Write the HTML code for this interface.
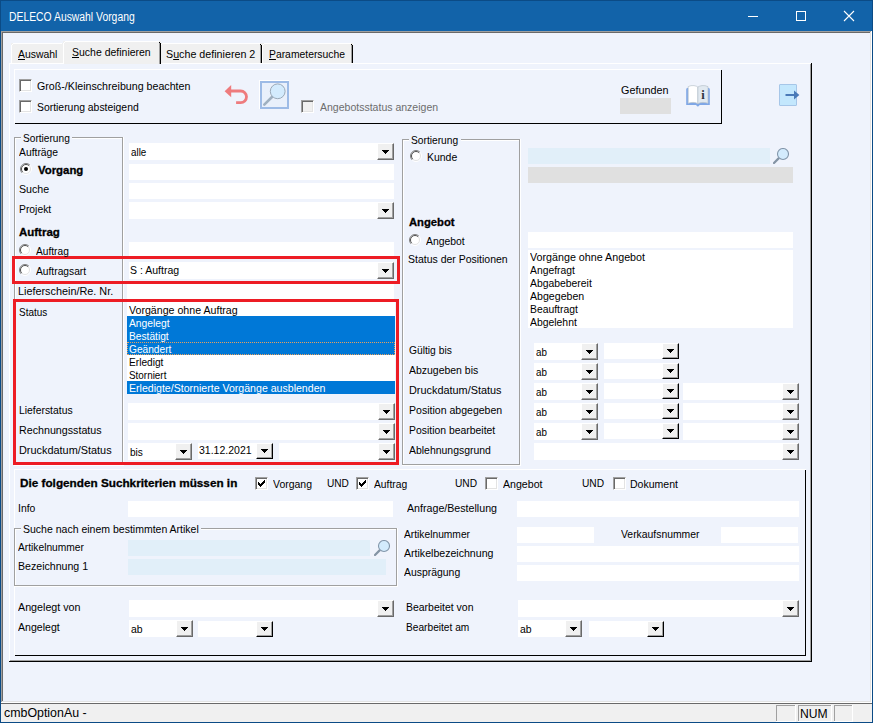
<!DOCTYPE html>
<html lang="de"><head><meta charset="utf-8"><title>DELECO Auswahl Vorgang</title><style>
html,body{margin:0;padding:0;background:#eff3fc;}
body{width:873px;height:723px;position:relative;overflow:hidden;font-family:"Liberation Sans",sans-serif;font-size:11px;}
body>div,.abs{position:absolute;}
.t{position:absolute;white-space:nowrap;transform-origin:0 0;display:block;}
.btn{background:#f0f0f0;box-sizing:border-box;border-top:1px solid #fff;border-left:1px solid #fff;border-right:1px solid #696969;border-bottom:1px solid #696969;box-shadow:inset -1px -1px 0 #a0a0a0;}
.btn svg{position:absolute;left:4px;top:6px;display:block;}
.btn.d svg{top:5px;}
.btn.d{border-right-color:#000;border-bottom-color:#000;}
.chk{width:13px;height:13px;box-sizing:border-box;background:#fff;border:1px solid;border-color:#a0a0a0 #fff #fff #a0a0a0;box-shadow:inset 1px 1px 0 #696969, inset -1px -1px 0 #e3e3e3;}
.chk svg{left:2px!important;top:2px!important;}
.chk.dis{background:#f0f0f0;}
</style></head><body>
<div style="left:0px;top:0px;width:873px;height:723px;background:#0b4b86;"></div>
<div style="left:1px;top:1px;width:871px;height:30px;background:#1263a9;"></div>
<div style="left:1px;top:31px;width:871px;height:672px;background:#eff3fc;"></div>
<div style="left:1px;top:31px;width:1px;height:672px;background:#a0a0a0;"></div>
<div style="left:2px;top:32px;width:1px;height:670px;background:#696969;"></div>
<div style="left:1px;top:31px;width:870px;height:1px;background:#a0a0a0;"></div>
<div style="left:2px;top:32px;width:868px;height:1px;background:#696969;"></div>
<div style="left:870px;top:32px;width:1px;height:670px;background:#e3e3e3;"></div>
<div style="left:871px;top:31px;width:1px;height:672px;background:#fff;"></div>
<div style="left:2px;top:701px;width:869px;height:1px;background:#e3e3e3;"></div>
<div style="left:1px;top:702px;width:871px;height:1px;background:#fff;"></div>
<svg class="abs" style="left:735px;top:0" width="138" height="31" viewBox="0 0 138 31"><path d="M13 16.5h10" stroke="#fff" stroke-width="1"/><rect x="61.5" y="11.5" width="9" height="9" fill="none" stroke="#fff" stroke-width="1"/><path d="M109 11l10 10M119 11l-10 10" stroke="#fff" stroke-width="1.1"/></svg>
<div style="left:1px;top:703px;width:871px;height:1px;background:#696969;"></div>
<div style="left:1px;top:704px;width:871px;height:18px;background:#f0f0f0;"></div>
<div style="left:776px;top:705px;width:1px;height:16px;background:#a0a0a0;"></div>
<div style="left:776px;top:705px;width:19px;height:1px;background:#a0a0a0;"></div>
<div style="left:795px;top:705px;width:1px;height:17px;background:#fff;"></div>
<div style="left:776px;top:721px;width:20px;height:1px;background:#fff;"></div>
<div style="left:798px;top:705px;width:1px;height:16px;background:#a0a0a0;"></div>
<div style="left:798px;top:705px;width:33px;height:1px;background:#a0a0a0;"></div>
<div style="left:831px;top:705px;width:1px;height:17px;background:#fff;"></div>
<div style="left:798px;top:721px;width:34px;height:1px;background:#fff;"></div>
<div style="left:834px;top:705px;width:1px;height:16px;background:#a0a0a0;"></div>
<div style="left:834px;top:705px;width:18px;height:1px;background:#a0a0a0;"></div>
<div style="left:852px;top:705px;width:1px;height:17px;background:#fff;"></div>
<div style="left:834px;top:721px;width:19px;height:1px;background:#fff;"></div>
<div style="left:9px;top:63px;width:802px;height:1px;background:#fff;"></div>
<div style="left:9px;top:63px;width:1px;height:598px;background:#fff;"></div>
<div style="left:810px;top:64px;width:1px;height:597px;background:#a0a0a0;"></div>
<div style="left:811px;top:63px;width:1px;height:599px;background:#000;"></div>
<div style="left:10px;top:660px;width:801px;height:1px;background:#a0a0a0;"></div>
<div style="left:9px;top:661px;width:803px;height:1px;background:#000;"></div>
<div style="left:11px;top:43px;width:53px;height:20px;background:#f0f0f0;"></div>
<div style="left:11px;top:45px;width:1px;height:18px;background:#fff;"></div>
<div style="left:13px;top:43px;width:49px;height:1px;background:#fff;"></div>
<div style="left:12px;top:44px;width:1px;height:1px;background:#fff;"></div>
<div style="left:160px;top:43px;width:102px;height:20px;background:#f0f0f0;"></div>
<div style="left:160px;top:45px;width:1px;height:18px;background:#fff;"></div>
<div style="left:162px;top:43px;width:98px;height:1px;background:#fff;"></div>
<div style="left:161px;top:44px;width:1px;height:1px;background:#fff;"></div>
<div style="left:261px;top:45px;width:1px;height:18px;background:#000;"></div>
<div style="left:260px;top:44px;width:1px;height:1px;background:#000;"></div>
<div style="left:260px;top:45px;width:1px;height:18px;background:#a0a0a0;"></div>
<div style="left:262px;top:43px;width:91px;height:20px;background:#f0f0f0;"></div>
<div style="left:262px;top:45px;width:1px;height:18px;background:#fff;"></div>
<div style="left:264px;top:43px;width:87px;height:1px;background:#fff;"></div>
<div style="left:263px;top:44px;width:1px;height:1px;background:#fff;"></div>
<div style="left:352px;top:45px;width:1px;height:18px;background:#000;"></div>
<div style="left:351px;top:44px;width:1px;height:1px;background:#000;"></div>
<div style="left:351px;top:45px;width:1px;height:18px;background:#a0a0a0;"></div>
<div style="left:63px;top:41px;width:98px;height:23px;background:#f0f0f0;"></div>
<div style="left:63px;top:43px;width:1px;height:21px;background:#fff;"></div>
<div style="left:65px;top:41px;width:94px;height:1px;background:#fff;"></div>
<div style="left:64px;top:42px;width:1px;height:1px;background:#fff;"></div>
<div style="left:160px;top:43px;width:1px;height:21px;background:#000;"></div>
<div style="left:159px;top:42px;width:1px;height:1px;background:#000;"></div>
<div style="left:159px;top:43px;width:1px;height:21px;background:#a0a0a0;"></div>
<div style="left:14px;top:69px;width:707px;height:1px;background:#fff;"></div>
<div style="left:14px;top:69px;width:1px;height:54px;background:#fff;"></div>
<div style="left:721px;top:70px;width:1px;height:54px;background:#000;"></div>
<div style="left:15px;top:123px;width:707px;height:1px;background:#000;"></div>
<div class="chk" style="left:19px;top:79px"></div>
<div class="chk" style="left:19px;top:100px"></div>
<div class="chk dis" style="left:301px;top:100px"></div>
<svg class="abs" style="left:220px;top:80px" width="32" height="28" viewBox="220 80 32 28"><path d="M230.5 91H240.7A5.8 5.8 0 0 1 240.7 102.6H236.1" fill="none" stroke="#ee7b7d" stroke-width="2.8"/><path d="M224.6 91.2L231.2 85V97.2z" fill="#ee7b7d"/></svg>
<div style="left:259px;top:80px;width:30px;height:29px;background:#fff;"></div>
<div style="left:260px;top:81px;width:29px;height:28px;background:#e9f0fb;border:2px solid #9dbbe6;box-sizing:border-box"></div>
<svg class="abs" style="left:260px;top:81px" width="29" height="28" viewBox="260 81 29 28"><path d="M264.3 104.6L272 97" stroke="#9fb0c0" stroke-width="2.6" stroke-linecap="round"/><circle cx="277.7" cy="91.3" r="7.4" fill="#d3ebfd" stroke="#9aa9b8" stroke-width="1"/></svg>
<div style="left:620px;top:98px;width:51px;height:16px;background:#e0e0e0;"></div>
<svg class="abs" style="left:684px;top:83px" width="28" height="26" viewBox="684 83 28 26"><path d="M686.2 89.2Q686.2 87.7 688 87.7H708Q709.8 87.7 709.8 89.2V104.9H699.8L697.9 106.8L695.9 104.9H686.2z" fill="#7fa7e6"/><path d="M688.2 86.6Q691 85.2 694 85.6Q696.5 86 697.9 87V103.7Q696 102.4 693 102.4Q690 102.4 688.2 103.3z" fill="#fff" stroke="#b9c3cc" stroke-width="0.7"/><path d="M697.9 87Q699.5 86 702 85.6Q705 85.2 708 86.6V103.3Q706 102.4 703 102.4Q700 102.4 697.9 103.7z" fill="#e1e9f0" stroke="#b9c3cc" stroke-width="0.7"/><text x="703.1" y="98.7" font-family="Liberation Serif, serif" font-size="12.5" font-weight="bold" text-anchor="middle" fill="#2d3340">i</text></svg>
<div style="left:779px;top:84px;width:18px;height:22px;background:#c3e7fd;border:1px solid #a6c6e8;box-sizing:border-box;border-radius:1px"></div>
<svg class="abs" style="left:780px;top:86px" width="22" height="18" viewBox="780 86 22 18"><path d="M785.5 95H795" stroke="#4a7ab8" stroke-width="2"/><path d="M794 90.6L799.4 95L794 99.4z" fill="#4a7ab8"/></svg>
<div style="left:15px;top:138px;width:107px;height:1px;background:#fff;"></div>
<div style="left:15px;top:138px;width:1px;height:326px;background:#fff;"></div>
<div style="left:14px;top:465px;width:110px;height:1px;background:#fff;"></div>
<div style="left:123px;top:137px;width:1px;height:329px;background:#fff;"></div>
<div style="left:14px;top:137px;width:109px;height:1px;background:#a0a0a0;"></div>
<div style="left:14px;top:464px;width:109px;height:1px;background:#a0a0a0;"></div>
<div style="left:14px;top:137px;width:1px;height:328px;background:#a0a0a0;"></div>
<div style="left:122px;top:137px;width:1px;height:328px;background:#a0a0a0;"></div>
<div style="left:21px;top:137px;width:51px;height:2px;background:#eff3fc;"></div>
<svg class="abs" style="left:20px;top:163px" width="12" height="12" viewBox="0 0 12 12"><circle cx="6" cy="6" r="5" fill="#fff"/><path d="M9.9 2.1A5.5 5.5 0 0 0 2.1 9.9" fill="none" stroke="#808080" stroke-width="1"/><path d="M9.2 2.8A4.5 4.5 0 0 0 2.8 9.2" fill="none" stroke="#505050" stroke-width="1"/><path d="M9.9 2.1A5.5 5.5 0 0 1 2.1 9.9" fill="none" stroke="#fff" stroke-width="1"/><path d="M9.2 2.8A4.5 4.5 0 0 1 2.8 9.2" fill="none" stroke="#e3e3e3" stroke-width="1"/><circle cx="6" cy="6" r="2" fill="#000"/></svg>
<svg class="abs" style="left:19px;top:244px" width="12" height="12" viewBox="0 0 12 12"><circle cx="6" cy="6" r="5" fill="#fff"/><path d="M9.9 2.1A5.5 5.5 0 0 0 2.1 9.9" fill="none" stroke="#808080" stroke-width="1"/><path d="M9.2 2.8A4.5 4.5 0 0 0 2.8 9.2" fill="none" stroke="#505050" stroke-width="1"/><path d="M9.9 2.1A5.5 5.5 0 0 1 2.1 9.9" fill="none" stroke="#fff" stroke-width="1"/><path d="M9.2 2.8A4.5 4.5 0 0 1 2.8 9.2" fill="none" stroke="#e3e3e3" stroke-width="1"/></svg>
<svg class="abs" style="left:19px;top:264px" width="12" height="12" viewBox="0 0 12 12"><circle cx="6" cy="6" r="5" fill="#fff"/><path d="M9.9 2.1A5.5 5.5 0 0 0 2.1 9.9" fill="none" stroke="#808080" stroke-width="1"/><path d="M9.2 2.8A4.5 4.5 0 0 0 2.8 9.2" fill="none" stroke="#505050" stroke-width="1"/><path d="M9.9 2.1A5.5 5.5 0 0 1 2.1 9.9" fill="none" stroke="#fff" stroke-width="1"/><path d="M9.2 2.8A4.5 4.5 0 0 1 2.8 9.2" fill="none" stroke="#e3e3e3" stroke-width="1"/></svg>
<div style="left:129px;top:143px;width:248px;height:17px;background:#fff;"></div>
<div class="btn" style="left:377px;top:143px;width:17px;height:17px"><svg width="7" height="4" viewBox="0 0 7 4"><path d="M0 0h7v1H0zM1 1h5v1H1zM2 2h3v1H2zM3 3h1v1H3z"/></svg></div>
<div style="left:129px;top:164px;width:265px;height:16px;background:#fff;"></div>
<div style="left:129px;top:183px;width:265px;height:16px;background:#fff;"></div>
<div style="left:129px;top:202px;width:248px;height:17px;background:#fff;"></div>
<div class="btn" style="left:377px;top:202px;width:17px;height:17px"><svg width="7" height="4" viewBox="0 0 7 4"><path d="M0 0h7v1H0zM1 1h5v1H1zM2 2h3v1H2zM3 3h1v1H3z"/></svg></div>
<div style="left:129px;top:242px;width:265px;height:14px;background:#fff;"></div>
<div style="left:129px;top:262px;width:248px;height:17px;background:#fff;"></div>
<div class="btn" style="left:377px;top:262px;width:17px;height:17px"><svg width="7" height="4" viewBox="0 0 7 4"><path d="M0 0h7v1H0zM1 1h5v1H1zM2 2h3v1H2zM3 3h1v1H3z"/></svg></div>
<div style="left:127px;top:284px;width:267px;height:15px;background:#fff;"></div>
<div style="left:127px;top:302px;width:268px;height:92px;background:#fff;"></div>
<div style="left:127px;top:316px;width:268px;height:39px;background:#0078d7;"></div>
<div style="left:127px;top:381px;width:268px;height:13px;background:#0078d7;"></div>
<div style="left:127px;top:342px;width:268px;height:13px;border:1px dotted #e8a05c;box-sizing:border-box"></div>
<div style="left:128px;top:403px;width:250px;height:17px;background:#fff;"></div>
<div class="btn" style="left:378px;top:403px;width:17px;height:17px"><svg width="7" height="4" viewBox="0 0 7 4"><path d="M0 0h7v1H0zM1 1h5v1H1zM2 2h3v1H2zM3 3h1v1H3z"/></svg></div>
<div style="left:128px;top:423px;width:250px;height:17px;background:#fff;"></div>
<div class="btn" style="left:378px;top:423px;width:17px;height:17px"><svg width="7" height="4" viewBox="0 0 7 4"><path d="M0 0h7v1H0zM1 1h5v1H1zM2 2h3v1H2zM3 3h1v1H3z"/></svg></div>
<div style="left:128px;top:443px;width:47px;height:17px;background:#fff;"></div>
<div class="btn" style="left:175px;top:443px;width:17px;height:17px"><svg width="7" height="4" viewBox="0 0 7 4"><path d="M0 0h7v1H0zM1 1h5v1H1zM2 2h3v1H2zM3 3h1v1H3z"/></svg></div>
<div style="left:198px;top:443px;width:58px;height:16px;background:#fff;"></div>
<div class="btn d" style="left:256px;top:443px;width:17px;height:16px"><svg width="7" height="4" viewBox="0 0 7 4"><path d="M0 0h7v1H0zM1 1h5v1H1zM2 2h3v1H2zM3 3h1v1H3z"/></svg></div>
<div style="left:279px;top:443px;width:99px;height:17px;background:#fff;"></div>
<div class="btn" style="left:378px;top:443px;width:17px;height:17px"><svg width="7" height="4" viewBox="0 0 7 4"><path d="M0 0h7v1H0zM1 1h5v1H1zM2 2h3v1H2zM3 3h1v1H3z"/></svg></div>
<div style="left:12px;top:256px;width:388px;height:28px;border:3px solid #ed1c24;box-sizing:border-box"></div>
<div style="left:13px;top:299px;width:386px;height:166px;border:3px solid #ed1c24;box-sizing:border-box"></div>
<div style="left:403px;top:140px;width:116px;height:1px;background:#fff;"></div>
<div style="left:403px;top:140px;width:1px;height:324px;background:#fff;"></div>
<div style="left:402px;top:465px;width:119px;height:1px;background:#fff;"></div>
<div style="left:520px;top:139px;width:1px;height:327px;background:#fff;"></div>
<div style="left:402px;top:139px;width:118px;height:1px;background:#a0a0a0;"></div>
<div style="left:402px;top:464px;width:118px;height:1px;background:#a0a0a0;"></div>
<div style="left:402px;top:139px;width:1px;height:326px;background:#a0a0a0;"></div>
<div style="left:519px;top:139px;width:1px;height:326px;background:#a0a0a0;"></div>
<div style="left:409px;top:139px;width:52px;height:2px;background:#eff3fc;"></div>
<svg class="abs" style="left:410px;top:150px" width="12" height="12" viewBox="0 0 12 12"><circle cx="6" cy="6" r="5" fill="#fff"/><path d="M9.9 2.1A5.5 5.5 0 0 0 2.1 9.9" fill="none" stroke="#808080" stroke-width="1"/><path d="M9.2 2.8A4.5 4.5 0 0 0 2.8 9.2" fill="none" stroke="#505050" stroke-width="1"/><path d="M9.9 2.1A5.5 5.5 0 0 1 2.1 9.9" fill="none" stroke="#fff" stroke-width="1"/><path d="M9.2 2.8A4.5 4.5 0 0 1 2.8 9.2" fill="none" stroke="#e3e3e3" stroke-width="1"/></svg>
<svg class="abs" style="left:409px;top:234px" width="12" height="12" viewBox="0 0 12 12"><circle cx="6" cy="6" r="5" fill="#fff"/><path d="M9.9 2.1A5.5 5.5 0 0 0 2.1 9.9" fill="none" stroke="#808080" stroke-width="1"/><path d="M9.2 2.8A4.5 4.5 0 0 0 2.8 9.2" fill="none" stroke="#505050" stroke-width="1"/><path d="M9.9 2.1A5.5 5.5 0 0 1 2.1 9.9" fill="none" stroke="#fff" stroke-width="1"/><path d="M9.2 2.8A4.5 4.5 0 0 1 2.8 9.2" fill="none" stroke="#e3e3e3" stroke-width="1"/></svg>
<div style="left:528px;top:148px;width:242px;height:16px;background:#e1eff9;"></div>
<svg class="abs" style="left:773px;top:148px" width="16" height="16" viewBox="0 0 16 16"><path d="M1 15L5.6 10.4" stroke="#8494a5" stroke-width="2.2" stroke-linecap="round"/><circle cx="10" cy="6" r="5.5" fill="#d3ebfd" stroke="#8396aa" stroke-width="1.1"/></svg>
<div style="left:528px;top:167px;width:265px;height:16px;background:#e0e0e0;"></div>
<div style="left:528px;top:232px;width:265px;height:16px;background:#fff;"></div>
<div style="left:528px;top:250px;width:265px;height:78px;background:#fff;"></div>
<div style="left:534px;top:343px;width:47px;height:17px;background:#fff;"></div>
<div class="btn" style="left:581px;top:343px;width:17px;height:17px"><svg width="7" height="4" viewBox="0 0 7 4"><path d="M0 0h7v1H0zM1 1h5v1H1zM2 2h3v1H2zM3 3h1v1H3z"/></svg></div>
<div style="left:604px;top:343px;width:58px;height:16px;background:#fff;"></div>
<div class="btn d" style="left:662px;top:343px;width:17px;height:16px"><svg width="7" height="4" viewBox="0 0 7 4"><path d="M0 0h7v1H0zM1 1h5v1H1zM2 2h3v1H2zM3 3h1v1H3z"/></svg></div>
<div style="left:534px;top:363px;width:47px;height:17px;background:#fff;"></div>
<div class="btn" style="left:581px;top:363px;width:17px;height:17px"><svg width="7" height="4" viewBox="0 0 7 4"><path d="M0 0h7v1H0zM1 1h5v1H1zM2 2h3v1H2zM3 3h1v1H3z"/></svg></div>
<div style="left:604px;top:363px;width:58px;height:16px;background:#fff;"></div>
<div class="btn d" style="left:662px;top:363px;width:17px;height:16px"><svg width="7" height="4" viewBox="0 0 7 4"><path d="M0 0h7v1H0zM1 1h5v1H1zM2 2h3v1H2zM3 3h1v1H3z"/></svg></div>
<div style="left:534px;top:383px;width:47px;height:17px;background:#fff;"></div>
<div class="btn" style="left:581px;top:383px;width:17px;height:17px"><svg width="7" height="4" viewBox="0 0 7 4"><path d="M0 0h7v1H0zM1 1h5v1H1zM2 2h3v1H2zM3 3h1v1H3z"/></svg></div>
<div style="left:604px;top:383px;width:58px;height:16px;background:#fff;"></div>
<div class="btn d" style="left:662px;top:383px;width:17px;height:16px"><svg width="7" height="4" viewBox="0 0 7 4"><path d="M0 0h7v1H0zM1 1h5v1H1zM2 2h3v1H2zM3 3h1v1H3z"/></svg></div>
<div style="left:683px;top:383px;width:99px;height:17px;background:#fff;"></div>
<div class="btn" style="left:782px;top:383px;width:17px;height:17px"><svg width="7" height="4" viewBox="0 0 7 4"><path d="M0 0h7v1H0zM1 1h5v1H1zM2 2h3v1H2zM3 3h1v1H3z"/></svg></div>
<div style="left:534px;top:403px;width:47px;height:17px;background:#fff;"></div>
<div class="btn" style="left:581px;top:403px;width:17px;height:17px"><svg width="7" height="4" viewBox="0 0 7 4"><path d="M0 0h7v1H0zM1 1h5v1H1zM2 2h3v1H2zM3 3h1v1H3z"/></svg></div>
<div style="left:604px;top:403px;width:58px;height:16px;background:#fff;"></div>
<div class="btn d" style="left:662px;top:403px;width:17px;height:16px"><svg width="7" height="4" viewBox="0 0 7 4"><path d="M0 0h7v1H0zM1 1h5v1H1zM2 2h3v1H2zM3 3h1v1H3z"/></svg></div>
<div style="left:683px;top:403px;width:99px;height:17px;background:#fff;"></div>
<div class="btn" style="left:782px;top:403px;width:17px;height:17px"><svg width="7" height="4" viewBox="0 0 7 4"><path d="M0 0h7v1H0zM1 1h5v1H1zM2 2h3v1H2zM3 3h1v1H3z"/></svg></div>
<div style="left:534px;top:423px;width:47px;height:17px;background:#fff;"></div>
<div class="btn" style="left:581px;top:423px;width:17px;height:17px"><svg width="7" height="4" viewBox="0 0 7 4"><path d="M0 0h7v1H0zM1 1h5v1H1zM2 2h3v1H2zM3 3h1v1H3z"/></svg></div>
<div style="left:604px;top:423px;width:58px;height:16px;background:#fff;"></div>
<div class="btn d" style="left:662px;top:423px;width:17px;height:16px"><svg width="7" height="4" viewBox="0 0 7 4"><path d="M0 0h7v1H0zM1 1h5v1H1zM2 2h3v1H2zM3 3h1v1H3z"/></svg></div>
<div style="left:683px;top:423px;width:99px;height:17px;background:#fff;"></div>
<div class="btn" style="left:782px;top:423px;width:17px;height:17px"><svg width="7" height="4" viewBox="0 0 7 4"><path d="M0 0h7v1H0zM1 1h5v1H1zM2 2h3v1H2zM3 3h1v1H3z"/></svg></div>
<div style="left:534px;top:443px;width:248px;height:17px;background:#fff;"></div>
<div class="btn" style="left:782px;top:443px;width:17px;height:17px"><svg width="7" height="4" viewBox="0 0 7 4"><path d="M0 0h7v1H0zM1 1h5v1H1zM2 2h3v1H2zM3 3h1v1H3z"/></svg></div>
<div style="left:14px;top:469px;width:792px;height:1px;background:#fff;"></div>
<div style="left:14px;top:469px;width:1px;height:186px;background:#fff;"></div>
<div style="left:805px;top:470px;width:1px;height:186px;background:#000;"></div>
<div style="left:15px;top:655px;width:791px;height:1px;background:#000;"></div>
<div class="chk" style="left:255px;top:477px"><svg width="7" height="7" viewBox="0 0 7 7" style="position:absolute;left:1px;top:1px"><path d="M0 2h1v3h-1zM1 3h1v3h-1zM2 4h1v3h-1zM3 3h1v3h-1zM4 2h1v3h-1zM5 1h1v3h-1zM6 0h1v3h-1z" fill="#000"/></svg></div>
<div class="chk" style="left:356px;top:477px"><svg width="7" height="7" viewBox="0 0 7 7" style="position:absolute;left:1px;top:1px"><path d="M0 2h1v3h-1zM1 3h1v3h-1zM2 4h1v3h-1zM3 3h1v3h-1zM4 2h1v3h-1zM5 1h1v3h-1zM6 0h1v3h-1z" fill="#000"/></svg></div>
<div class="chk" style="left:485px;top:477px"></div>
<div class="chk" style="left:613px;top:477px"></div>
<div style="left:128px;top:501px;width:265px;height:16px;background:#fff;"></div>
<div style="left:517px;top:501px;width:282px;height:16px;background:#fff;"></div>
<div style="left:15px;top:529px;width:381px;height:1px;background:#fff;"></div>
<div style="left:15px;top:529px;width:1px;height:56px;background:#fff;"></div>
<div style="left:14px;top:586px;width:384px;height:1px;background:#fff;"></div>
<div style="left:397px;top:528px;width:1px;height:59px;background:#fff;"></div>
<div style="left:14px;top:528px;width:383px;height:1px;background:#a0a0a0;"></div>
<div style="left:14px;top:585px;width:383px;height:1px;background:#a0a0a0;"></div>
<div style="left:14px;top:528px;width:1px;height:58px;background:#a0a0a0;"></div>
<div style="left:396px;top:528px;width:1px;height:58px;background:#a0a0a0;"></div>
<div style="left:21px;top:528px;width:180px;height:2px;background:#eff3fc;"></div>
<div style="left:128px;top:540px;width:242px;height:16px;background:#e1eff9;"></div>
<svg class="abs" style="left:374px;top:540px" width="16" height="16" viewBox="0 0 16 16"><path d="M1 15L5.6 10.4" stroke="#8494a5" stroke-width="2.2" stroke-linecap="round"/><circle cx="10" cy="6" r="5.5" fill="#d3ebfd" stroke="#8396aa" stroke-width="1.1"/></svg>
<div style="left:128px;top:559px;width:258px;height:16px;background:#e1eff9;"></div>
<div style="left:517px;top:527px;width:77px;height:16px;background:#fff;"></div>
<div style="left:721px;top:527px;width:77px;height:16px;background:#fff;"></div>
<div style="left:517px;top:546px;width:282px;height:16px;background:#fff;"></div>
<div style="left:517px;top:565px;width:282px;height:16px;background:#fff;"></div>
<div style="left:129px;top:600px;width:248px;height:17px;background:#fff;"></div>
<div class="btn" style="left:377px;top:600px;width:17px;height:17px"><svg width="7" height="4" viewBox="0 0 7 4"><path d="M0 0h7v1H0zM1 1h5v1H1zM2 2h3v1H2zM3 3h1v1H3z"/></svg></div>
<div style="left:129px;top:620px;width:47px;height:17px;background:#fff;"></div>
<div class="btn" style="left:176px;top:620px;width:17px;height:17px"><svg width="7" height="4" viewBox="0 0 7 4"><path d="M0 0h7v1H0zM1 1h5v1H1zM2 2h3v1H2zM3 3h1v1H3z"/></svg></div>
<div style="left:198px;top:621px;width:58px;height:16px;background:#fff;"></div>
<div class="btn d" style="left:256px;top:621px;width:17px;height:16px"><svg width="7" height="4" viewBox="0 0 7 4"><path d="M0 0h7v1H0zM1 1h5v1H1zM2 2h3v1H2zM3 3h1v1H3z"/></svg></div>
<div style="left:518px;top:600px;width:264px;height:17px;background:#fff;"></div>
<div class="btn" style="left:782px;top:600px;width:17px;height:17px"><svg width="7" height="4" viewBox="0 0 7 4"><path d="M0 0h7v1H0zM1 1h5v1H1zM2 2h3v1H2zM3 3h1v1H3z"/></svg></div>
<div style="left:518px;top:620px;width:47px;height:17px;background:#fff;"></div>
<div class="btn" style="left:565px;top:620px;width:17px;height:17px"><svg width="7" height="4" viewBox="0 0 7 4"><path d="M0 0h7v1H0zM1 1h5v1H1zM2 2h3v1H2zM3 3h1v1H3z"/></svg></div>
<div style="left:589px;top:621px;width:58px;height:16px;background:#fff;"></div>
<div class="btn d" style="left:647px;top:621px;width:17px;height:16px"><svg width="7" height="4" viewBox="0 0 7 4"><path d="M0 0h7v1H0zM1 1h5v1H1zM2 2h3v1H2zM3 3h1v1H3z"/></svg></div>
<span class="t" style="left:8.8px;top:9.1px;font-size:12px;line-height:16px;color:#fff;transform:scaleX(0.8644);">DELECO Auswahl Vorgang</span>
<span class="t" style="left:3.9px;top:705.1px;font-size:12px;line-height:16px;color:#000;transform:scaleX(1.0319);">cmbOptionAu -</span>
<span class="t" style="left:800.1px;top:705.7px;font-size:12.5px;line-height:16.5px;color:#000;transform:scaleX(0.9695);">NUM</span>
<span class="t" style="left:18.1px;top:46.9px;font-size:11px;line-height:15px;color:#000;transform:scaleX(0.9476);"><u>A</u>uswahl</span>
<span class="t" style="left:166.4px;top:46.9px;font-size:11px;line-height:15px;color:#000;transform:scaleX(0.9735);">S<u>u</u>che definieren 2</span>
<span class="t" style="left:269.4px;top:46.9px;font-size:11px;line-height:15px;color:#000;transform:scaleX(0.9415);"><u>P</u>arametersuche</span>
<span class="t" style="left:72.4px;top:44.9px;font-size:11px;line-height:15px;color:#000;transform:scaleX(0.9532);"><u>S</u>uche definieren</span>
<span class="t" style="left:36.9px;top:78.9px;font-size:11px;line-height:15px;color:#000;transform:scaleX(0.9686);">Groß-/Kleinschreibung beachten</span>
<span class="t" style="left:37.4px;top:99.9px;font-size:11px;line-height:15px;color:#000;transform:scaleX(0.9448);">Sortierung absteigend</span>
<span class="t" style="left:319.5px;top:99.9px;font-size:11px;line-height:15px;color:#6d6d6d;transform:scaleX(0.9559);">Angebotsstatus anzeigen</span>
<span class="t" style="left:621.1px;top:82.9px;font-size:11px;line-height:15px;color:#000;transform:scaleX(0.9808);">Gefunden</span>
<span class="t" style="left:23.3px;top:130.9px;font-size:11px;line-height:15px;color:#000;transform:scaleX(0.9219);">Sortierung</span>
<span class="t" style="left:19.0px;top:144.9px;font-size:11px;line-height:15px;color:#000;transform:scaleX(0.9400);">Aufträge</span>
<span class="t" style="left:37.9px;top:162.9px;font-size:11px;line-height:15px;color:#000;transform:scaleX(1.0343);font-weight:bold;-webkit-text-stroke:0.3px #000;">Vorgang</span>
<span class="t" style="left:19.0px;top:181.9px;font-size:11px;line-height:15px;color:#000;transform:scaleX(0.9679);">Suche</span>
<span class="t" style="left:19.0px;top:201.9px;font-size:11px;line-height:15px;color:#000;transform:scaleX(0.9401);">Projekt</span>
<span class="t" style="left:19.0px;top:224.9px;font-size:11px;line-height:15px;color:#000;transform:scaleX(1.0432);font-weight:bold;-webkit-text-stroke:0.3px #000;">Auftrag</span>
<span class="t" style="left:36.1px;top:243.9px;font-size:11px;line-height:15px;color:#000;transform:scaleX(0.9248);">Auftrag</span>
<span class="t" style="left:36.1px;top:263.9px;font-size:11px;line-height:15px;color:#000;transform:scaleX(0.9310);">Auftragsart</span>
<span class="t" style="left:18.2px;top:283.9px;font-size:11px;line-height:15px;color:#000;transform:scaleX(0.9854);">Lieferschein/Re. Nr.</span>
<span class="t" style="left:19.0px;top:304.9px;font-size:11px;line-height:15px;color:#000;transform:scaleX(0.9042);">Status</span>
<span class="t" style="left:19.0px;top:402.9px;font-size:11px;line-height:15px;color:#000;transform:scaleX(0.9424);">Lieferstatus</span>
<span class="t" style="left:19.0px;top:422.9px;font-size:11px;line-height:15px;color:#000;transform:scaleX(0.9718);">Rechnungsstatus</span>
<span class="t" style="left:19.0px;top:442.9px;font-size:11px;line-height:15px;color:#000;transform:scaleX(0.9899);">Druckdatum/Status</span>
<span class="t" style="left:130.8px;top:144.9px;font-size:11px;line-height:15px;color:#000;transform:scaleX(0.8934);">alle</span>
<span class="t" style="left:130.3px;top:262.9px;font-size:11px;line-height:15px;color:#000;transform:scaleX(0.9557);">S : Auftrag</span>
<span class="t" style="left:129.2px;top:302.9px;font-size:11px;line-height:15px;color:#000;transform:scaleX(0.9658);">Vorgänge ohne Auftrag</span>
<span class="t" style="left:129.2px;top:315.9px;font-size:11px;line-height:15px;color:#fff;transform:scaleX(0.9370);">Angelegt</span>
<span class="t" style="left:129.2px;top:328.9px;font-size:11px;line-height:15px;color:#fff;transform:scaleX(0.9273);">Bestätigt</span>
<span class="t" style="left:129.2px;top:341.9px;font-size:11px;line-height:15px;color:#fff;transform:scaleX(0.9243);">Geändert</span>
<span class="t" style="left:129.2px;top:354.9px;font-size:11px;line-height:15px;color:#000;transform:scaleX(0.9223);">Erledigt</span>
<span class="t" style="left:129.2px;top:367.9px;font-size:11px;line-height:15px;color:#000;transform:scaleX(0.8995);">Storniert</span>
<span class="t" style="left:129.2px;top:380.9px;font-size:11px;line-height:15px;color:#fff;transform:scaleX(0.9615);">Erledigte/Stornierte Vorgänge ausblenden</span>
<span class="t" style="left:129.5px;top:444.9px;font-size:11px;line-height:15px;color:#000;transform:scaleX(0.9173);">bis</span>
<span class="t" style="left:198.5px;top:442.9px;font-size:11px;line-height:15px;color:#000;transform:scaleX(0.9553);">31.12.2021</span>
<span class="t" style="left:411.4px;top:132.9px;font-size:11px;line-height:15px;color:#000;transform:scaleX(0.9278);">Sortierung</span>
<span class="t" style="left:427.3px;top:149.9px;font-size:11px;line-height:15px;color:#000;transform:scaleX(0.9493);">Kunde</span>
<span class="t" style="left:409.4px;top:214.9px;font-size:11px;line-height:15px;color:#000;transform:scaleX(1.0222);font-weight:bold;-webkit-text-stroke:0.3px #000;">Angebot</span>
<span class="t" style="left:425.6px;top:233.9px;font-size:11px;line-height:15px;color:#000;transform:scaleX(0.9443);">Angebot</span>
<span class="t" style="left:408.4px;top:251.9px;font-size:11px;line-height:15px;color:#000;transform:scaleX(0.9534);">Status der Positionen</span>
<span class="t" style="left:408.9px;top:342.9px;font-size:11px;line-height:15px;color:#000;transform:scaleX(0.9333);">Gültig bis</span>
<span class="t" style="left:408.9px;top:362.9px;font-size:11px;line-height:15px;color:#000;transform:scaleX(0.9508);">Abzugeben bis</span>
<span class="t" style="left:408.9px;top:382.9px;font-size:11px;line-height:15px;color:#000;transform:scaleX(0.9888);">Druckdatum/Status</span>
<span class="t" style="left:408.9px;top:402.9px;font-size:11px;line-height:15px;color:#000;transform:scaleX(0.9584);">Position abgegeben</span>
<span class="t" style="left:408.9px;top:422.9px;font-size:11px;line-height:15px;color:#000;transform:scaleX(0.9460);">Position bearbeitet</span>
<span class="t" style="left:408.9px;top:442.9px;font-size:11px;line-height:15px;color:#000;transform:scaleX(0.9496);">Ablehnungsgrund</span>
<span class="t" style="left:530.3px;top:249.9px;font-size:11px;line-height:15px;color:#000;transform:scaleX(0.9741);">Vorgänge ohne Angebot</span>
<span class="t" style="left:530.3px;top:262.9px;font-size:11px;line-height:15px;color:#000;transform:scaleX(0.9391);">Angefragt</span>
<span class="t" style="left:530.3px;top:275.9px;font-size:11px;line-height:15px;color:#000;transform:scaleX(0.9442);">Abgabebereit</span>
<span class="t" style="left:530.3px;top:288.9px;font-size:11px;line-height:15px;color:#000;transform:scaleX(0.9630);">Abgegeben</span>
<span class="t" style="left:530.3px;top:301.9px;font-size:11px;line-height:15px;color:#000;transform:scaleX(0.9416);">Beauftragt</span>
<span class="t" style="left:530.3px;top:314.9px;font-size:11px;line-height:15px;color:#000;transform:scaleX(0.9446);">Abgelehnt</span>
<span class="t" style="left:536.1px;top:344.9px;font-size:11px;line-height:15px;color:#000;transform:scaleX(0.8898);">ab</span>
<span class="t" style="left:536.1px;top:364.9px;font-size:11px;line-height:15px;color:#000;transform:scaleX(0.8898);">ab</span>
<span class="t" style="left:536.1px;top:384.9px;font-size:11px;line-height:15px;color:#000;transform:scaleX(0.8898);">ab</span>
<span class="t" style="left:536.1px;top:404.9px;font-size:11px;line-height:15px;color:#000;transform:scaleX(0.8898);">ab</span>
<span class="t" style="left:536.1px;top:424.9px;font-size:11px;line-height:15px;color:#000;transform:scaleX(0.8898);">ab</span>
<span class="t" style="left:19.8px;top:475.9px;font-size:11px;line-height:15px;color:#000;transform:scaleX(1.0676);font-weight:bold;-webkit-text-stroke:0.3px #000;">Die folgenden Suchkriterien müssen in</span>
<span class="t" style="left:273.1px;top:476.9px;font-size:11px;line-height:15px;color:#000;transform:scaleX(0.9516);">Vorgang</span>
<span class="t" style="left:326.8px;top:475.9px;font-size:11px;line-height:15px;color:#000;transform:scaleX(0.9185);">UND</span>
<span class="t" style="left:373.9px;top:476.9px;font-size:11px;line-height:15px;color:#000;transform:scaleX(0.9360);">Auftrag</span>
<span class="t" style="left:454.8px;top:475.9px;font-size:11px;line-height:15px;color:#000;transform:scaleX(0.9269);">UND</span>
<span class="t" style="left:502.9px;top:476.9px;font-size:11px;line-height:15px;color:#000;transform:scaleX(0.9638);">Angebot</span>
<span class="t" style="left:581.5px;top:475.9px;font-size:11px;line-height:15px;color:#000;transform:scaleX(0.9269);">UND</span>
<span class="t" style="left:630.1px;top:476.9px;font-size:11px;line-height:15px;color:#000;transform:scaleX(0.9573);">Dokument</span>
<span class="t" style="left:17.6px;top:500.9px;font-size:11px;line-height:15px;color:#000;transform:scaleX(0.9423);">Info</span>
<span class="t" style="left:407.1px;top:500.9px;font-size:11px;line-height:15px;color:#000;transform:scaleX(0.9682);">Anfrage/Bestellung</span>
<span class="t" style="left:23.3px;top:521.9px;font-size:11px;line-height:15px;color:#000;transform:scaleX(0.9552);">Suche nach einem bestimmten Artikel</span>
<span class="t" style="left:17.6px;top:539.9px;font-size:11px;line-height:15px;color:#000;transform:scaleX(0.9294);">Artikelnummer</span>
<span class="t" style="left:17.6px;top:558.9px;font-size:11px;line-height:15px;color:#000;transform:scaleX(0.9632);">Bezeichnung 1</span>
<span class="t" style="left:403.9px;top:526.9px;font-size:11px;line-height:15px;color:#000;transform:scaleX(0.9308);">Artikelnummer</span>
<span class="t" style="left:621.4px;top:526.9px;font-size:11px;line-height:15px;color:#000;transform:scaleX(0.9440);">Verkaufsnummer</span>
<span class="t" style="left:403.9px;top:545.9px;font-size:11px;line-height:15px;color:#000;transform:scaleX(0.9618);">Artikelbezeichnung</span>
<span class="t" style="left:403.9px;top:564.9px;font-size:11px;line-height:15px;color:#000;transform:scaleX(0.9473);">Ausprägung</span>
<span class="t" style="left:17.6px;top:599.9px;font-size:11px;line-height:15px;color:#000;transform:scaleX(0.9732);">Angelegt von</span>
<span class="t" style="left:17.6px;top:619.9px;font-size:11px;line-height:15px;color:#000;transform:scaleX(0.9600);">Angelegt</span>
<span class="t" style="left:130.8px;top:621.9px;font-size:11px;line-height:15px;color:#000;transform:scaleX(0.9469);">ab</span>
<span class="t" style="left:405.6px;top:599.9px;font-size:11px;line-height:15px;color:#000;transform:scaleX(0.9515);">Bearbeitet von</span>
<span class="t" style="left:405.6px;top:619.9px;font-size:11px;line-height:15px;color:#000;transform:scaleX(0.9243);">Bearbeitet am</span>
<span class="t" style="left:519.7px;top:621.9px;font-size:11px;line-height:15px;color:#000;transform:scaleX(0.9469);">ab</span>
</body></html>
